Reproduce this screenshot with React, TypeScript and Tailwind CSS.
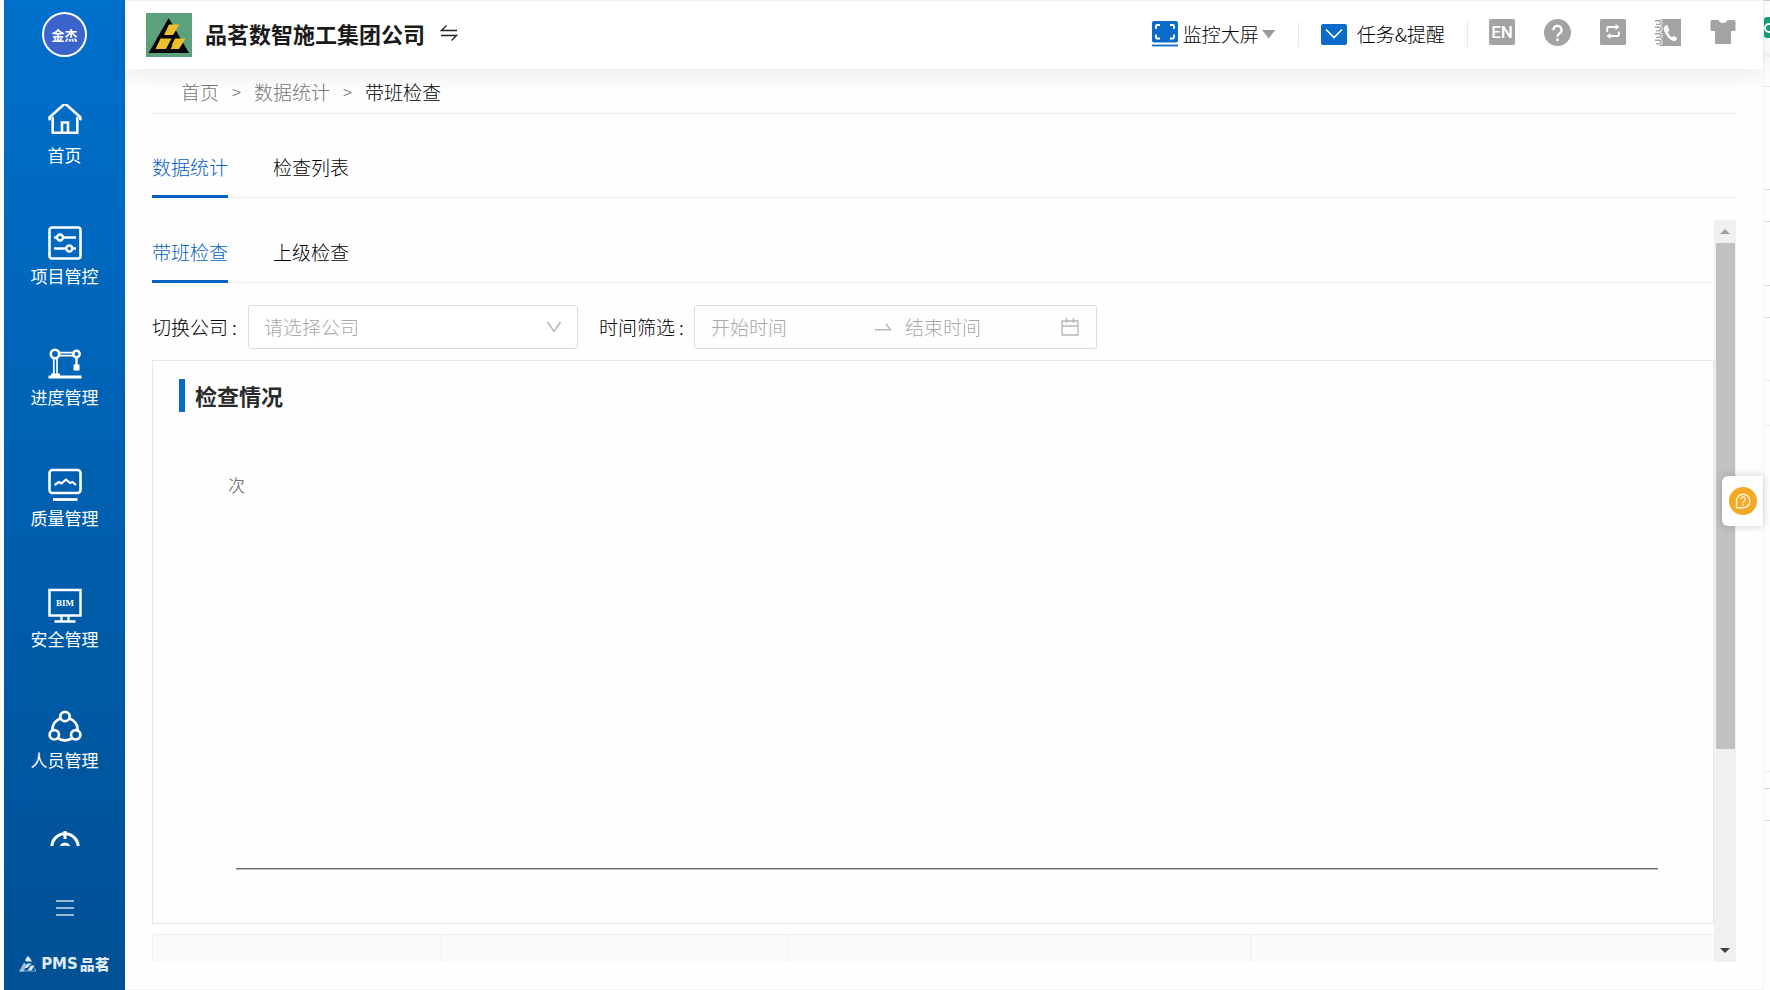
import { useState } from "react";
import type { ReactNode } from "react";

function HomeIcon() {
  return (
    <svg viewBox="0 4 36 36" className="size-9 overflow-visible" fill="none" stroke="currentColor" strokeWidth="2.6" strokeLinejoin="round" strokeLinecap="round" aria-hidden="true">
      <path d="M5.700 18v14.800h24.600V18" />
      <path d="M2.600 19.200v-2L18 3.500l15.400 13.700v2" />
      <path d="M15 32v-9.500h6V32" strokeLinejoin="miter" />
    </svg>
  );
}

function ControlIcon() {
  return (
    <svg viewBox="0 0 36 36" className="size-9" fill="none" stroke="currentColor" strokeWidth="2.400" aria-hidden="true">
      <rect x="2.500" y="2.500" width="31" height="31" rx="2.500" strokeWidth="2.600" />
      <path d="M7 12.500h3.500M16 12.500h13" />
      <circle cx="13" cy="12.500" r="3" />
      <path d="M7 23.500h12M25.500 23.500H29" />
      <circle cx="22.300" cy="23.500" r="3" />
    </svg>
  );
}

function CraneIcon() {
  return (
    <svg viewBox="0 0 36 36" className="size-9" fill="none" stroke="currentColor" strokeWidth="2.300" aria-hidden="true">
      <circle cx="8" cy="8" r="4.200" strokeWidth="2.600" />
      <circle cx="29.500" cy="8" r="3.200" strokeWidth="2.500" />
      <path d="M12 6.700h14.500M12 9.700h14.500" strokeWidth="1.700" />
      <path d="M6.800 12v16M10 12v16" strokeWidth="1.700" />
      <path d="M29.500 11v10" />
      <path d="M26.500 18.500H32.500v6h-6z" fill="currentColor" stroke="none" />
      <path d="M4 27.500h9v3H4z" fill="currentColor" stroke="none" />
      <path d="M1.500 31h33" strokeWidth="2.800" />
    </svg>
  );
}

function QualityIcon() {
  return (
    <svg viewBox="0 0 36 36" className="size-9" fill="none" stroke="currentColor" strokeWidth="2.600" strokeLinejoin="round" aria-hidden="true">
      <rect x="2.500" y="3" width="31" height="23" rx="3" />
      <path d="M7.500 18l4.500-3 2.500 1.500 4.500-4 4 3.500 2.500-1 3.500 3" strokeWidth="2.200" />
      <path d="M6 32.500h24.500" strokeWidth="2.800" />
    </svg>
  );
}

function BimIcon() {
  return (
    <svg viewBox="0 0 36 36" className="size-9" fill="none" stroke="currentColor" strokeWidth="2.300" aria-hidden="true">
      <rect x="2.500" y="2" width="31" height="25.500" strokeWidth="2.500" />
      <text x="18" y="18" textAnchor="middle" fontSize="9" fontWeight="700" fill="currentColor" stroke="none" className="font-['Liberation_Serif',serif]">
        BIM
      </text>
      <path d="M14.500 28v5M21.500 28v5M7.500 33.500h21" />
    </svg>
  );
}

function PeopleIcon() {
  return (
    <svg viewBox="0 0 36 36" className="size-9" fill="none" stroke="currentColor" strokeWidth="2.700" aria-hidden="true">
      <circle cx="18" cy="7.500" r="4.700" />
      <circle cx="7.300" cy="25.800" r="4.700" />
      <circle cx="28.700" cy="25.800" r="4.700" />
      <path d="M13.300 9.500A12.800 12.800 0 0 0 5.300 21.200M22.700 9.500a12.800 12.800 0 0 1 8 11.700M11 29.300a14 14 0 0 0 14 0" />
    </svg>
  );
}

function DialIcon() {
  return (
    <svg viewBox="0 0 36 36" className="size-9" fill="none" stroke="currentColor" strokeWidth="3" aria-hidden="true">
      <circle cx="18" cy="17" r="13.200" />
      <circle cx="18" cy="18" r="4" />
      <path d="M18 1v8" />
    </svg>
  );
}

const navItems: { label: string; icon: ReactNode }[] = [
  { label: "首页", icon: <HomeIcon /> },
  { label: "项目管控", icon: <ControlIcon /> },
  { label: "进度管理", icon: <CraneIcon /> },
  { label: "质量管理", icon: <QualityIcon /> },
  { label: "安全管理", icon: <BimIcon /> },
  { label: "人员管理", icon: <PeopleIcon /> },
  { label: "", icon: <DialIcon /> },
];

function Sidebar() {
  return (
    <aside className="flex w-[121px] shrink-0 flex-col items-center bg-linear-to-b from-[#0070cc] to-[#005094] text-white">
      <button type="button" className="mt-3 flex size-[45px] shrink-0 items-center justify-center rounded-full border-2 border-white bg-[#3a63cc] text-[13px] leading-none font-bold">
        金杰
      </button>
      <nav className="mt-[47px] flex min-h-0 flex-1 basis-0 flex-col gap-[58px] overflow-hidden">
        {navItems.map((item, i) => (
          <a key={i} href="#" className="flex h-[63px] shrink-0 flex-col items-center gap-[3px]">
            {item.icon}
            <span className="h-6 text-[17px] leading-6">{item.label}</span>
          </a>
        ))}
      </nav>
      <button type="button" aria-label="菜单" className="mt-[52px] flex h-5 w-[18px] shrink-0 flex-col justify-center gap-[5px] opacity-60">
        <span className="h-0.5 w-full bg-white" />
        <span className="h-0.5 w-full bg-white" />
        <span className="h-0.5 w-full bg-white" />
      </button>
      <div className="mt-9 mb-4 flex h-5 shrink-0 items-center gap-1 text-[#dcebf7]">
        <svg viewBox="0 0 18 16" className="h-4 w-[18px]" aria-hidden="true">
          <path d="M8.500 0l2 1.500 2.500 4H7.500L6 4.500z" fill="currentColor" />
          <path d="M5 6.500L0 15.500h4.500L8 9z" fill="currentColor" opacity=".7" />
          <path d="M8.500 7.500h4l-4.500 4.500H5.800zM12 9.500h3.500l-3 5H8.500z" fill="currentColor" />
          <path d="M1 15h16l-2-3.500" stroke="currentColor" fill="none" opacity=".6" />
        </svg>
        <span className="flex items-center gap-0.5 text-[15px] leading-5 font-black">
          <span className="font-['DejaVu_Sans',sans-serif] text-[15px] font-bold">PMS</span>品茗
        </span>
      </div>
    </aside>
  );
}

function CompanyLogo() {
  return (
    <svg viewBox="0 0 46 44" className="h-11 w-[46px]" aria-hidden="true">
      <rect width="46" height="44" fill="#5aa17c" />
      <path d="M22.700 5L43 40H2.500z" fill="#050505" />
      <path d="M23 11.500h10.500l-6.500 10.500H18z" fill="#ecbf2c" />
      <path d="M14.500 25.500h11L20 36H9.500z" fill="#ecbf2c" />
      <path d="M29 25.500h10.500L33 36h-8.500l2-3.500h-1z" fill="#ecbf2c" />
    </svg>
  );
}

function Header() {
  return (
    <header className="relative z-10 flex h-[68px] shrink-0 items-center bg-white pr-[27px] pl-[21px] shadow-[0_6px_20px_rgba(0,21,41,0.08)]">
      <CompanyLogo />
      <h1 className="ml-[13px] pb-1 text-[22px] leading-8 font-bold text-[#1a1a1a]">品茗数智施工集团公司</h1>
      <button type="button" aria-label="切换公司" className="ml-[15px] pb-1">
        <svg viewBox="0 0 18 18" className="size-[18px]" fill="none" stroke="#222" strokeWidth="1.300" aria-hidden="true">
          <path d="M6.500 1.500L1.500 6.500H17M1 11.500h15.500l-5 5" />
        </svg>
      </button>

      <div className="ml-auto flex items-center pb-0.5 text-[19px] leading-7 font-light text-black">
        <button type="button" className="flex items-center">
          <svg viewBox="0 0 26 26" className="size-[26px]" fill="none" aria-hidden="true">
            <rect width="26" height="21.500" rx="2" fill="#0a6cc8" />
            <path d="M4 8V5a1 1 0 0 1 1-1h3M18 4h3a1 1 0 0 1 1 1v3M22 13.500v3a1 1 0 0 1-1 1h-3M8 17.500H5a1 1 0 0 1-1-1v-3" stroke="#fff" strokeWidth="1.800" />
            <path d="M0 24.500h26" stroke="#0a6cc8" strokeWidth="1.800" />
          </svg>
          <span className="ml-[5px]">监控大屏</span>
          <span className="ml-[3px] h-[9px] w-3.5 bg-[#999] [clip-path:polygon(0_0,100%_0,50%_100%)]" />
        </button>
        <span className="ml-[22px] h-[25px] w-px bg-[#e8e8e8]" />
        <button type="button" className="ml-[22px] flex items-center">
          <svg viewBox="0 0 26 21" className="h-[21px] w-[26px]" fill="none" aria-hidden="true">
            <rect width="26" height="21" rx="2" fill="#0a6cc8" />
            <path d="M5 5.500l8 8 8-8" stroke="#fff" strokeWidth="1.600" />
          </svg>
          <span className="ml-2.5">任务&amp;提醒</span>
        </button>
        <span className="ml-[22px] h-[25px] w-px bg-[#e8e8e8]" />
        <div className="ml-[21px] flex items-center gap-[29px] pb-1 text-[#a3a3a3]">
          <button type="button" className="flex size-[26px] items-center justify-center rounded-[2px] bg-[#a3a3a3] font-['Roboto',sans-serif] text-[17px] leading-none font-medium text-white">
            EN
          </button>
          <button type="button" aria-label="帮助">
            <svg viewBox="0 0 28 28" className="size-[27px]" aria-hidden="true">
              <circle cx="14" cy="14" r="14" fill="currentColor" />
              <path d="M9.800 11.500a4.200 4.200 0 1 1 6.300 3.500c-1.500.9-2.100 1.500-2.100 3.300" fill="none" stroke="#fff" strokeWidth="2.400" />
              <circle cx="14" cy="21.500" r="1.500" fill="#fff" />
            </svg>
          </button>
          <button type="button" aria-label="切换">
            <svg viewBox="0 0 26 26" className="size-[26px]" fill="none" aria-hidden="true">
              <rect width="26" height="26" rx="1.500" fill="currentColor" />
              <path d="M7.200 13V9a1 1 0 0 1 1-1H16M18.800 12.500V16a1 1 0 0 1-1 1H10" stroke="#fff" strokeWidth="1.900" />
              <path d="M15.500 5l4 3-4 3zM10.500 14l-4 3 4 3z" fill="#fff" />
            </svg>
          </button>
          <button type="button" aria-label="通讯录">
            <svg viewBox="0 0 26 27" className="h-[27px] w-[26px]" fill="none" aria-hidden="true">
              <path d="M4 0H26v27H4z" fill="currentColor" />
              {[3, 9.500, 16, 22.500].map((y) => (
                <g key={y}>
                  <path d={`M2 ${y - 1.200}h2.300a1.800 1.800 0 0 1 0 3.600H2`} stroke="#fff" strokeWidth="3" />
                  <path d={`M0 ${y - 1.200}h4.300a1.800 1.800 0 0 1 0 3.600H1`} stroke="currentColor" strokeWidth="1.400" />
                </g>
              ))}
              <path d="M10.500 6.500c-2.500 2-2 5 .5 9s5.500 6.500 8 6.500c2 0 3.500-2 3-3l-3-2c-1 0-1.500 1.300-2.500 1-1.500-.7-3-3-3.500-4.500-.2-1 1.500-1.500 1.300-2.500L12.500 6.300c-.5-.5-1.500-.3-2 .2z" fill="#fff" />
            </svg>
          </button>
          <button type="button" aria-label="皮肤">
            <svg viewBox="0 0 26 26" className="size-[26px]" aria-hidden="true">
              <path d="M2 1h6.500c.8 4 8.200 4 9 0H24a1.500 1.500 0 0 1 1.500 1.500V11a1 1 0 0 1-1 1H21v12a1 1 0 0 1-1 1H6a1 1 0 0 1-1-1V12H1.500a1 1 0 0 1-1-1V2.500A1.500 1.500 0 0 1 2 1z" fill="currentColor" />
            </svg>
          </button>
        </div>
      </div>
    </header>
  );
}

function Tabs({ items, name }: { items: string[]; name: string }) {
  const [active, setActive] = useState(0);
  return (
    <div role="tablist" aria-label={name} className="relative flex shrink-0 gap-[45px] text-[19px] leading-7 font-light">
      <span className="absolute inset-x-0 bottom-0 h-px bg-[#efefef]" />
      {items.map((t, i) => (
        <button
          key={t}
          type="button"
          role="tab"
          aria-selected={i === active}
          onClick={() => setActive(i)}
          className={
            i === active
              ? "relative h-[46px] border-b-[3px] border-[#0463c4] pb-[13px] text-[#0060c8]"
              : "relative h-[46px] border-b-[3px] border-transparent pb-[13px] text-black"
          }
        >
          {t}
        </button>
      ))}
    </div>
  );
}

function Filters() {
  return (
    <form className="mt-[22px] flex items-center text-[19px] leading-7 font-light text-black">
      <label htmlFor="company">切换公司</label>
      <span className="ml-1 w-4">:</span>
      <div className="relative w-[330px]">
        <select id="company" defaultValue="" className="h-11 w-full appearance-none rounded-[3px] border border-[#dcdcdc] bg-white pl-[15px] font-light text-[#a8a8a8]">
          <option value="">请选择公司</option>
        </select>
        <svg viewBox="0 0 16 12" className="pointer-events-none absolute top-4 right-4 h-3 w-4" fill="none" stroke="#b5b5b5" strokeWidth="1.400" aria-hidden="true">
          <path d="M1.500 1l6.500 9.500L14.500 1" />
        </svg>
      </div>
      <label htmlFor="start" className="ml-[21px]">
        时间筛选
      </label>
      <span className="ml-1 w-[15px]">:</span>
      <div className="flex h-11 w-[403px] items-center rounded-[3px] border border-[#dcdcdc] pr-[17px] pl-4">
        <input id="start" placeholder="开始时间" className="w-[164px] min-w-0 outline-none placeholder:text-[#a8a8a8]" />
        <svg viewBox="0 0 17 8" className="h-2 w-[17px]" fill="none" stroke="#b5b5b5" strokeWidth="1.400" aria-hidden="true">
          <path d="M0 6.800h15.500L11 1" />
        </svg>
        <input aria-label="结束时间" placeholder="结束时间" className="ml-[13px] w-0 min-w-0 flex-1 outline-none placeholder:text-[#a8a8a8]" />
        <svg viewBox="0 0 18 20" className="h-5 w-[18px]" fill="none" stroke="#b5b5b5" strokeWidth="1.300" aria-hidden="true">
          <path d="M1 4h16v14H1zM1 9h16M5.500 1v5M12.500 1v5" />
        </svg>
      </div>
    </form>
  );
}

function CheckPanel() {
  return (
    <section className="mt-[11px] flex h-[564px] shrink-0 flex-col border border-[#e6e6e6] pt-[18px] pr-[55px] pb-[53px] pl-[26px]">
      <div className="flex items-center gap-2.5">
        <span className="h-[33px] w-1.5 bg-[#0a6cc8]" />
        <h2 className="text-[22px] leading-[33px] font-bold text-[#2a2a2a]">检查情况</h2>
      </div>
      <div className="mt-[61px] ml-[49px] text-[17px] leading-6 font-light text-[#50525c]">次</div>
      <div className="mt-auto ml-[57px] h-0.5 border-t border-[#6e7079] bg-[#bdbdc6]" />
    </section>
  );
}

function Scrollbar() {
  return (
    <div className="flex w-[22px] shrink-0 flex-col items-center bg-[#f0f0f0]" aria-hidden="true">
      <div className="flex h-[23px] w-full shrink-0 items-center justify-center">
        <span className="h-[5px] w-2.5 bg-[#a0a0a0] [clip-path:polygon(50%_0,100%_100%,0_100%)]" />
      </div>
      <div className="h-[506px] w-[19px] bg-[#c1c1c1]" />
      <div className="mt-auto flex h-[23px] w-full shrink-0 items-center justify-center">
        <span className="h-[5px] w-2.5 bg-[#404040] [clip-path:polygon(0_0,100%_0,50%_100%)]" />
      </div>
    </div>
  );
}

function HelpTab() {
  return (
    <button type="button" aria-label="在线咨询" className="absolute top-[475px] right-0 z-20 flex h-[50px] w-[41px] items-center justify-center rounded-l-[6px] bg-white shadow-[0_0_8px_rgba(0,0,0,0.2)]">
      <svg viewBox="0 0 28 28" className="size-7" fill="none" aria-hidden="true">
        <circle cx="14" cy="14" r="14" fill="#f3a926" />
        <path d="M7.500 20.700V14a6.700 6.700 0 1 1 6.700 6.700z" stroke="#fff3d6" strokeWidth="1.400" />
        <path d="M11.800 12.300a2.300 2.300 0 1 1 3.400 2c-.8.500-1.100.9-1.100 1.900" stroke="#fff3d6" strokeWidth="1.400" />
        <circle cx="14.100" cy="18" r=".9" fill="#fff3d6" />
      </svg>
    </button>
  );
}

export default function App() {
  return (
    <div className="relative flex h-screen overflow-hidden bg-[#fefefe] pl-1 font-['Noto_Sans_CJK_SC',sans-serif]">
      <Sidebar />
      <div className="relative flex min-w-0 flex-1 flex-col border-y border-r border-[#f3f3f3]">
        <Header />
        <main className="flex min-h-0 flex-1 flex-col pr-[27px] pb-[27px] pl-[27px]">
          <nav aria-label="面包屑" className="flex h-[45px] shrink-0 items-center border-b border-[#ececec] pt-0.5 pl-[29px] text-[19px] leading-7 font-light text-[#777]">
            <a href="#">首页</a>
            <span className="w-[35px] text-center text-[17px]">&gt;</span>
            <a href="#">数据统计</a>
            <span className="w-[35px] text-center text-[17px]">&gt;</span>
            <span className="text-black">带班检查</span>
          </nav>
          <div className="mt-[38px] flex shrink-0 flex-col">
            <Tabs name="页面" items={["数据统计", "检查列表"]} />
          </div>
          <div className="mt-[22px] flex min-h-0 flex-1">
            <div className="flex min-w-0 flex-1 flex-col overflow-hidden pt-[17px]">
              <Tabs name="检查类型" items={["带班检查", "上级检查"]} />
              <Filters />
              <CheckPanel />
              <table className="mt-2.5 w-full shrink-0 table-fixed border-separate border-spacing-0 rounded-tl-[3px] border-t border-l border-[#f0f0f0] bg-[#fafafa]">
                <colgroup>
                  <col className="w-[289px]" />
                  <col className="w-[347px]" />
                  <col className="w-[462px]" />
                  <col />
                </colgroup>
                <thead>
                  <tr>
                    <th className="h-[60px] border-r border-[#f0f0f0]" />
                    <th className="border-r border-[#f0f0f0]" />
                    <th className="border-r border-[#f0f0f0]" />
                    <th />
                  </tr>
                </thead>
              </table>
            </div>
            <Scrollbar />
          </div>
        </main>
        <HelpTab />
      </div>
      <div className="flex w-1.5 shrink-0 flex-col overflow-hidden border-t border-[#ccc]">
        <span className="mt-4 flex h-[21px] w-3 shrink-0 items-center rounded-l-[3px] bg-[#12a37c]">
          <span className="size-2.5 rounded-full border-2 border-white" />
        </span>
        <span className="mt-[15px] h-1 shrink-0 bg-[#f3f5f6]" />
        <span className="mt-[29px] h-px shrink-0 bg-[#e8e8e8]" />
        <span className="mt-[102px] h-px shrink-0 bg-[#dcdcdc]" />
        <span className="mt-[31px] h-px shrink-0 bg-[#dcdcdc]" />
        <span className="mt-[63px] h-px shrink-0 bg-[#dcdcdc]" />
        <span className="mt-[31px] h-px shrink-0 bg-[#dcdcdc]" />
        <span className="mt-[62px] h-px shrink-0 bg-[#e3efee]" />
        <span className="mt-11 h-px shrink-0 bg-[#e3efee]" />
        <span className="mt-[345px] h-px shrink-0 bg-[#e3efee]" />
        <span className="mt-4 h-px shrink-0 bg-[#d8d8d8]" />
        <span className="mt-[31px] h-px shrink-0 bg-[#dcdcdc]" />
      </div>
    </div>
  );
}
